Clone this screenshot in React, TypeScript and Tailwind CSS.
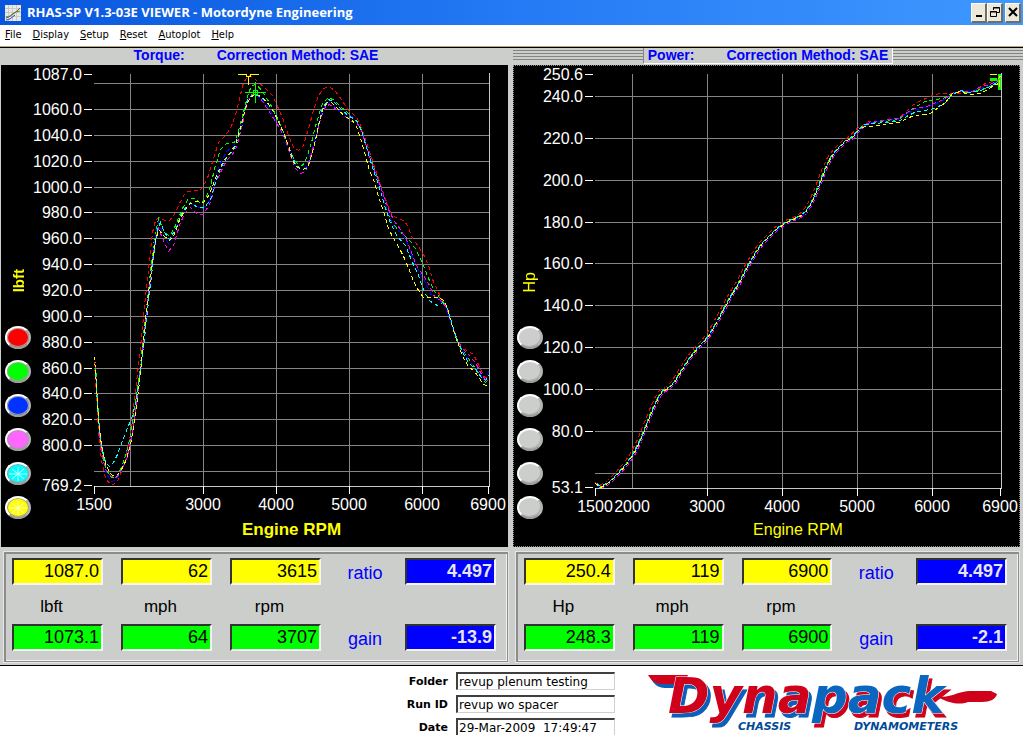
type Point = [number, number];

interface Series {
  color: string;
  points: Point[];
}

interface Tick {
  label: string;
  pos: number;
}

interface ChartProps {
  title: string;
  viewBox: string;
  left: number;
  right: number;
  bottom: number;
  yTicks: Tick[];
  xTicks: Tick[];
  gridX: number[];
  gridY: number[];
  series: Series[];
  boldTitle?: boolean;
  children?: React.ReactNode;
}

const COLORS = {
  red: '#ff0000',
  green: '#00ff00',
  blue: '#0000ff',
  magenta: '#ff00ff',
  cyan: '#00ffff',
  yellow: '#ffff00',
};

const torqueSeries: Series[] = [
  {
    color: COLORS.red,
    points: [
      [94, 362], [96, 395], [98, 430], [101, 460], [105, 478], [111, 485], [117, 481], [124, 463], [129, 438], [134, 398],
      [138, 365], [141, 338], [144, 305], [147, 278], [150, 250], [152, 232], [155, 220], [158, 217], [162, 219], [168, 221],
      [174, 214], [179, 203], [185, 192], [192, 190], [199, 190], [203, 186], [208, 175], [213, 158], [218, 142], [224, 136],
      [230, 128], [235, 115], [240, 94], [243, 82], [248, 75], [253, 77], [258, 82], [264, 87], [272, 95], [278, 108],
      [283, 120], [288, 135], [293, 147], [298, 150], [303, 145], [308, 128], [313, 110], [318, 95], [323, 88], [329, 86],
      [335, 91], [341, 99], [348, 110], [354, 115], [358, 120], [362, 130], [366, 142], [372, 160], [378, 178], [384, 196],
      [390, 212], [395, 217], [403, 220], [407, 225], [412, 238], [418, 246], [423, 254], [428, 265], [432, 279], [438, 292],
      [442, 300], [447, 308], [451, 323], [456, 338], [461, 347], [468, 351], [473, 354], [478, 364], [484, 377], [488, 376],
    ],
  },
  {
    color: COLORS.green,
    points: [
      [95, 362], [97, 400], [99, 430], [102, 455], [106, 470], [111, 477], [116, 477], [121, 467], [126, 452], [130, 435],
      [135, 400], [140, 365], [144, 325], [148, 290], [151, 262], [154, 238], [158, 218], [163, 230], [169, 236], [175, 225],
      [182, 208], [188, 198], [194, 198], [200, 203], [205, 199], [210, 185], [215, 165], [220, 149], [226, 143], [234, 142],
      [238, 130], [243, 112], [247, 96], [251, 85], [256, 84], [262, 91], [270, 104], [276, 116], [283, 132], [290, 153],
      [297, 163], [302, 165], [306, 158], [311, 142], [316, 122], [322, 103], [328, 97], [334, 100], [340, 106], [348, 113],
      [355, 119], [361, 129], [366, 145], [372, 163], [380, 186], [386, 208], [391, 222], [398, 230], [404, 235], [410, 241],
      [416, 250], [422, 263], [428, 278], [434, 291], [440, 298], [446, 306], [450, 320], [456, 338], [461, 349], [466, 355],
      [472, 364], [479, 374], [485, 382], [488, 380],
    ],
  },
  {
    color: COLORS.blue,
    points: [
      [95, 370], [97, 405], [99, 432], [102, 457], [106, 474], [111, 481], [116, 479], [121, 470], [126, 456], [131, 435],
      [136, 400], [141, 364], [145, 325], [149, 288], [152, 260], [155, 236], [158, 222], [163, 235], [168, 243], [174, 232],
      [182, 211], [190, 203], [196, 206], [202, 208], [208, 203], [214, 180], [219, 165], [226, 151], [233, 146], [237, 137],
      [242, 118], [247, 99], [253, 93], [260, 97], [268, 107], [276, 121], [283, 135], [290, 155], [296, 167], [301, 169],
      [306, 166], [311, 150], [316, 133], [321, 112], [326, 103], [331, 103], [338, 110], [346, 114], [354, 117], [361, 129],
      [367, 148], [373, 168], [380, 188], [387, 210], [392, 224], [399, 231], [406, 240], [413, 259], [419, 272], [425, 282],
      [431, 295], [438, 299], [445, 306], [451, 324], [457, 341], [463, 352], [470, 362], [477, 369], [483, 379], [486, 378], [488, 371],
    ],
  },
  {
    color: COLORS.magenta,
    points: [
      [95, 366], [97, 405], [99, 435], [102, 457], [106, 471], [111, 476], [116, 477], [121, 470], [127, 456], [132, 432],
      [137, 395], [141, 360], [145, 322], [149, 285], [152, 260], [155, 240], [158, 228], [163, 240], [168, 251], [173, 245],
      [179, 225], [184, 213], [190, 207], [197, 214], [203, 214], [210, 202], [215, 183], [220, 172], [226, 160], [232, 154],
      [236, 147], [241, 128], [246, 105], [251, 94], [256, 93], [262, 101], [270, 113], [277, 124], [284, 137], [290, 155],
      [295, 168], [300, 173], [305, 171], [310, 156], [315, 140], [320, 118], [325, 106], [329, 104], [336, 109], [344, 115],
      [351, 121], [357, 123], [361, 130], [366, 146], [372, 165], [380, 186], [388, 209], [394, 221], [400, 229], [406, 239],
      [412, 255], [417, 267], [423, 275], [428, 283], [434, 296], [440, 300], [446, 307], [451, 323], [457, 340], [463, 349],
      [470, 356], [476, 364], [481, 374], [486, 381], [488, 380],
    ],
  },
  {
    color: COLORS.cyan,
    points: [
      [95, 372], [97, 405], [99, 430], [102, 450], [105, 462], [109, 466], [113, 462], [117, 454], [121, 443], [126, 430],
      [131, 418], [135, 403], [139, 378], [143, 348], [147, 310], [151, 275], [154, 248], [157, 228], [160, 222], [164, 232],
      [169, 239], [175, 229], [182, 211], [190, 202], [197, 207], [204, 207], [210, 199], [215, 182], [220, 168], [227, 156],
      [233, 150], [237, 141], [242, 120], [247, 99], [253, 94], [260, 96], [268, 104], [276, 115], [283, 132], [289, 148],
      [295, 164], [301, 169], [307, 168], [312, 152], [317, 130], [322, 107], [328, 99], [334, 102], [341, 109], [349, 116],
      [356, 120], [361, 130], [366, 147], [372, 167], [378, 184], [384, 205], [390, 223], [397, 236], [405, 245], [412, 262],
      [418, 275], [424, 292], [430, 301], [437, 305], [442, 302], [447, 308], [452, 325], [457, 340], [463, 354], [468, 362],
      [475, 369], [481, 377], [485, 380], [488, 375],
    ],
  },
  {
    color: COLORS.yellow,
    points: [
      [94, 357], [96, 385], [98, 420], [101, 445], [105, 463], [109, 472], [112, 475], [116, 475], [120, 471], [125, 461],
      [130, 445], [134, 420], [138, 390], [141, 362], [144, 330], [147, 300], [151, 270], [154, 245], [158, 229], [163, 235],
      [169, 240], [173, 236], [178, 222], [184, 210], [190, 203], [196, 201], [203, 202], [209, 194], [214, 180], [219, 168],
      [224, 159], [230, 152], [235, 144], [240, 127], [245, 108], [249, 98], [255, 93], [262, 97], [270, 106], [276, 117],
      [282, 130], [288, 145], [292, 160], [297, 167], [302, 169], [307, 167], [311, 155], [315, 140], [319, 120], [323, 107],
      [327, 102], [331, 102], [337, 108], [344, 116], [351, 119], [356, 126], [360, 138], [364, 152], [369, 170], [374, 182],
      [378, 196], [383, 211], [388, 228], [393, 238], [398, 246], [404, 258], [409, 270], [413, 281], [418, 290], [423, 297],
      [430, 297], [437, 297], [442, 299], [447, 307], [450, 320], [454, 333], [459, 347], [463, 358], [468, 366], [474, 371],
      [479, 378], [483, 384], [488, 386],
    ],
  },
];

// All power runs share the climb up to 5000 rpm, they only separate above it
const powerClimb: Point[] = [
  [595, 483], [600, 487], [604, 485], [610, 481], [618, 473], [626, 464], [633, 454], [640, 440], [646, 425], [652, 410],
  [658, 397], [662, 391], [668, 388], [674, 382], [682, 369], [690, 357], [697, 348], [704, 341], [710, 333], [717, 321],
  [724, 308], [731, 295], [738, 284], [748, 265], [755, 253], [762, 243], [770, 235], [776, 229], [783, 224], [790, 220],
  [798, 217], [805, 212], [811, 203], [818, 187], [824, 171], [830, 158], [836, 150], [845, 141], [852, 137], [858, 130],
];

const shifted = (dx: number, dy: number): Point[] =>
  powerClimb.map(([x, y]) => [Math.max(x + dx, 595), y + dy]);

const powerSeries: Series[] = [
  {
    color: COLORS.red,
    points: [
      ...shifted(-3, -1), [862, 125], [868, 121], [880, 121], [890, 119], [898, 118], [905, 112], [912, 105], [920, 100],
      [928, 97], [933, 94], [942, 93], [955, 93], [966, 92], [972, 91], [980, 87], [986, 82], [996, 81], [1000, 76],
    ],
  },
  {
    color: COLORS.green,
    points: [
      ...shifted(-1, 0), [864, 125], [872, 122], [884, 121], [898, 119], [906, 113], [914, 107], [924, 101], [934, 99],
      [943, 98], [950, 94], [959, 91], [968, 92], [976, 90], [984, 88], [992, 85], [1000, 78],
    ],
  },
  {
    color: COLORS.blue,
    points: [
      ...shifted(0, 1), [864, 125], [872, 122], [886, 120], [898, 119], [906, 113], [914, 110], [924, 107], [934, 104],
      [944, 99], [952, 93], [960, 91], [970, 91], [980, 88], [990, 85], [1000, 79],
    ],
  },
  {
    color: COLORS.magenta,
    points: [
      ...shifted(1, 1), [866, 123], [876, 121], [888, 119], [898, 118], [906, 112], [915, 108], [926, 106], [936, 102],
      [945, 98], [953, 92], [962, 91], [972, 91], [980, 86], [990, 84], [1000, 78],
    ],
  },
  {
    color: COLORS.cyan,
    points: [
      ...shifted(0, -1), [864, 124], [874, 123], [886, 122], [898, 121], [906, 116], [914, 112], [924, 110], [934, 108],
      [944, 103], [952, 94], [960, 90], [968, 92], [978, 91], [988, 87], [1000, 80],
    ],
  },
  {
    color: COLORS.yellow,
    points: [
      ...powerClimb, [864, 126], [872, 126], [880, 125], [890, 123], [900, 122], [906, 118], [914, 115], [924, 114],
      [930, 113], [938, 107], [945, 102], [952, 93], [960, 91], [968, 94], [975, 94], [982, 92], [990, 87], [1000, 82],
    ],
  },
];

const torqueY: Tick[] = [
  { label: '1087.0', pos: 74 }, { label: '1060.0', pos: 109 }, { label: '1040.0', pos: 135 }, { label: '1020.0', pos: 161 },
  { label: '1000.0', pos: 187 }, { label: '980.0', pos: 212 }, { label: '960.0', pos: 238 }, { label: '940.0', pos: 264 },
  { label: '920.0', pos: 290 }, { label: '900.0', pos: 316 }, { label: '880.0', pos: 342 }, { label: '860.0', pos: 368 },
  { label: '840.0', pos: 393 }, { label: '820.0', pos: 419 }, { label: '800.0', pos: 445 }, { label: '769.2', pos: 485 },
];

const torqueX: Tick[] = [
  { label: '1500', pos: 94 }, { label: '3000', pos: 203 }, { label: '4000', pos: 276 },
  { label: '5000', pos: 349 }, { label: '6000', pos: 422 }, { label: '6900', pos: 488 },
];

const powerY: Tick[] = [
  { label: '250.6', pos: 74 }, { label: '240.0', pos: 96 }, { label: '220.0', pos: 138 }, { label: '200.0', pos: 180 },
  { label: '180.0', pos: 222 }, { label: '160.0', pos: 263 }, { label: '140.0', pos: 305 }, { label: '120.0', pos: 347 },
  { label: '100.0', pos: 389 }, { label: '80.0', pos: 431 }, { label: '53.1', pos: 487 },
];

const powerX: Tick[] = [
  { label: '1500', pos: 595 }, { label: '2000', pos: 632 }, { label: '3000', pos: 707 }, { label: '4000', pos: 782 },
  { label: '5000', pos: 857 }, { label: '6000', pos: 932 }, { label: '6900', pos: 1000 },
];

function toPath(points: Point[]) {
  return points.map(([x, y], i) => `${i === 0 ? 'M' : 'L'}${x} ${y}`).join(' ');
}

function Chart({ title, viewBox, left, right, bottom, yTicks, xTicks, gridX, gridY, series, boldTitle, children }: ChartProps) {
  return (
    <svg
      viewBox={viewBox}
      className="block h-auto w-full min-w-0 flex-1 overflow-visible font-['Liberation_Sans',Arial,sans-serif]"
      role="img"
      aria-label={title}
    >
      <g stroke="#848484" strokeWidth="1" shapeRendering="crispEdges">
        {gridX.map((x) => (
          <line key={x} x1={x + 0.5} x2={x + 0.5} y1="74" y2={bottom} />
        ))}
        {gridY.map((y) => (
          <line key={y} x1={left} x2={right} y1={y + 0.5} y2={y + 0.5} />
        ))}
      </g>

      {/* Runs */}
      <g fill="none" strokeWidth="1" strokeDasharray="4 3" shapeRendering="crispEdges">
        {series.map((s, i) => (
          <path key={s.color} d={toPath(s.points)} stroke={s.color} strokeDashoffset={i * 3} transform="translate(0.5 0.5)" />
        ))}
      </g>

      {/* Axes */}
      <g stroke="#c6c6c6" strokeWidth="1" shapeRendering="crispEdges">
        <line x1={right + 0.5} x2={right + 0.5} y1="73" y2={bottom + 1} />
        <line x1={left} x2={right} y1={bottom + 0.5} y2={bottom + 0.5} />
      </g>
      <g stroke="#ffffff" strokeWidth="1" shapeRendering="crispEdges">
        {yTicks.map((t) => (
          <line key={t.label} x1={left - 10} x2={left - 2} y1={t.pos + 0.5} y2={t.pos + 0.5} />
        ))}
        {xTicks
          .filter((t) => t.label !== '2000')
          .map((t) => (
            <line key={t.label} x1={t.pos + 0.5} x2={t.pos + 0.5} y1={bottom} y2={bottom + 8} />
          ))}
      </g>
      <g fill="#ffffff" fontSize="16">
        {yTicks.map((t) => (
          <text key={t.label} x={left - 12} y={t.pos + 6} textAnchor="end">
            {t.label}
          </text>
        ))}
        {xTicks.map((t) => (
          <text key={t.label} x={t.pos} y={bottom + 24} textAnchor="middle">
            {t.label}
          </text>
        ))}
      </g>
      <text
        x={(left + right) / 2}
        y="535"
        fill="#ffff00"
        fontSize={boldTitle ? 17 : 16}
        fontWeight={boldTitle ? 700 : 400}
        textAnchor="middle"
      >
        Engine RPM
      </text>
      {children}
    </svg>
  );
}

const runButtons = [
  { name: 'Red run', fill: 'bg-[#ff0000]' },
  { name: 'Green run', fill: 'bg-[#00ff00]' },
  { name: 'Blue run', fill: 'bg-[#0033ff]' },
  { name: 'Magenta run', fill: 'bg-[#ff66ff]' },
  { name: 'Cyan run', fill: 'bg-[#00ffff]', star: true },
  { name: 'Yellow run', fill: 'bg-[#ffff00]', star: true },
];

function RunSelector({ unit, bold, coloured }: { unit: string; bold?: boolean; coloured?: boolean }) {
  return (
    <div className="flex w-[30px] shrink-0 flex-col items-end">
      <div className="flex h-[261px] w-[26px] flex-col items-center justify-end pb-[34px]">
        <span
          className={`rotate-180 leading-none text-[#ffff00] [writing-mode:vertical-rl] ${
            bold ? 'text-[15px] font-bold' : 'text-[16px]'
          }`}
        >
          {unit}
        </span>
      </div>
      <div className="flex flex-col gap-[11px]">
        {runButtons.map((b) => (
          <button
            key={b.name}
            aria-label={b.name}
            className={`flex h-[23px] w-[26px] items-center justify-center rounded-[50%] border-2 border-t-white border-r-[#b4b4b4] border-b-[#9c9c9c] border-l-white ${
              coloured ? b.fill : 'bg-[#cccecc]'
            } ${coloured ? 'shadow-[inset_0_0_0_1px_#a0a0a0]' : 'shadow-[inset_-1px_-1px_0_#b0b0b0]'}`}
          >
            {coloured && b.star && (
              <svg viewBox="0 0 20 16" className="h-4 w-5" stroke="#ffffff" strokeWidth="1" opacity="0.8">
                <path d="M10 1V15M1 8H19M4 3L16 13M16 3L4 13" />
              </svg>
            )}
          </button>
        ))}
      </div>
    </div>
  );
}

const BOX =
  'h-[27px] w-full min-w-0 border-2 border-t-[#333333] border-l-[#333333] border-r-[#f4f4f4] border-b-[#f4f4f4] px-0.5 text-right text-[18px] leading-none outline-none';

interface ReadoutProps {
  id: string;
  unit: string;
  first: string[];
  second: string[];
  ratio: string;
  gain: string;
}

function Readout({ id, unit, first, second, ratio, gain }: ReadoutProps) {
  const units = [unit, 'mph', 'rpm'];

  return (
    <section className="mx-1 border border-[#8c8c8c] shadow-[inset_1px_1px_0_#8c8c8c,inset_-1px_-1px_0_#f2f2f2,0_0_0_1px_#e6e6e6]">
      <div className="grid grid-cols-[91fr_91fr_91fr_48fr_91fr] grid-rows-[27px_39px_27px] items-center gap-x-[18px] pt-[5px] pr-[11px] pb-[10px] pl-[7px]">
        {first.map((v, i) => (
          <input key={i} readOnly aria-label={`Primary ${units[i]}`} value={v} className={`${BOX} bg-[#ffff00] text-black`} />
        ))}
        <label htmlFor={`${id}-ratio`} className="pt-0.5 pl-1 text-center text-[18px] leading-none text-[#0000ff]">
          ratio
        </label>
        <input id={`${id}-ratio`} readOnly value={ratio} className={`${BOX} bg-[#0000ff] font-bold text-[#e6e6e6]`} />

        {units.map((u) => (
          <span key={u} className="pr-3 pt-1 text-center text-[17px] leading-none">
            {u}
          </span>
        ))}
        <span />
        <span />

        {second.map((v, i) => (
          <input key={i} readOnly aria-label={`Secondary ${units[i]}`} value={v} className={`${BOX} bg-[#00ff00] text-black`} />
        ))}
        <label htmlFor={`${id}-gain`} className="pt-0.5 pl-1 text-center text-[18px] leading-none text-[#0000ff]">
          gain
        </label>
        <input id={`${id}-gain`} readOnly value={gain} className={`${BOX} bg-[#0000ff] font-bold text-[#e6e6e6]`} />
      </div>
    </section>
  );
}

function TitleBar() {
  const button =
    'flex h-5 w-4 items-center justify-center border-r-2 border-b-2 border-t border-l border-t-white border-l-white border-r-[#716f64] border-b-[#716f64] bg-[#ece9d8]';
  return (
    <header className="flex h-[25px] items-center bg-gradient-to-r from-[#0855dd] via-[#237af4] to-[#3f98ff] pr-0.5 pl-[5px]">
      <svg viewBox="0 0 16 16" className="h-4 w-4">
        <rect width="16" height="16" fill="#e9e9e9" />
        <path d="M0 3.5H16M0 7.5H16M0 11.5H16M3.5 0V16M7.5 0V16M11.5 0V16" stroke="#c9c9c9" />
        <path d="M1 13C5 12 6 10 8 9S12 6 15 3" stroke="#e02020" fill="none" />
        <path d="M1 12C5 12 6 10 9 8S12 7 15 6" stroke="#20a020" fill="none" />
        <path d="M1 15C5 15 7 12 10 10" stroke="#3040e0" fill="none" />
      </svg>
      <h1 className="ml-1.5 flex-1 font-['Open_Sans',sans-serif] text-[13px] leading-none font-bold text-white">
        RHAS-SP V1.3-03E VIEWER - Motordyne Engineering
      </h1>
      <div className="flex">
        <button aria-label="Minimize" className={button}>
          <svg viewBox="0 0 12 12" className="h-3 w-3">
            <path d="M3 10H9" stroke="#000" strokeWidth="2" />
          </svg>
        </button>
        <button aria-label="Restore" className={button}>
          <svg viewBox="0 0 12 12" className="h-3 w-3" fill="none" stroke="#000">
            <path d="M4.500 4V1.500H10.500V6.500H8M4 2H11" />
            <path d="M1.500 5.500H7.500V10.500H1.500ZM1 6H8" />
          </svg>
        </button>
        <button aria-label="Close" className={`${button} ml-0.5`}>
          <svg viewBox="0 0 12 12" className="h-3 w-3">
            <path d="M2 2L10 10M10 2L2 10" stroke="#000" strokeWidth="2" />
          </svg>
        </button>
      </div>
    </header>
  );
}

function MenuBar() {
  return (
    <nav className="flex h-[21px] items-center gap-[11px] bg-white pl-[5px] font-['DejaVu_Sans_Condensed','DejaVu_Sans',sans-serif] text-[11px] text-black">
      {['File', 'Display', 'Setup', 'Reset', 'Autoplot', 'Help'].map((item) => (
        <button key={item}>
          <span className="underline">{item[0]}</span>
          {item.slice(1)}
        </button>
      ))}
    </nav>
  );
}

function Logo() {
  return (
    <svg
      viewBox="0 0 360 69"
      className="h-[69px] w-[360px] overflow-visible font-['DejaVu_Sans',sans-serif] font-bold italic"
      role="img"
      aria-label="Dynapack Chassis Dynamometers"
    >
      {/* Each half throws a hard shadow in the colour of the other half */}
      <g className="[filter:drop-shadow(3px_4px_0_#0b5fb8)]" fill="#d0021b">
        <path d="M8 9H48L44 18H22C15 18 11 14 8 9Z" />
        <text x="28" y="47" fontSize="50" stroke="#ffffff" strokeWidth="1" paintOrder="stroke">
          Dyna
        </text>
      </g>
      <g className="[filter:drop-shadow(3px_4px_0_#d0021b)]" fill="#0b66c0">
        <text x="172" y="47" fontSize="50" stroke="#ffffff" strokeWidth="1" paintOrder="stroke">
          pack
        </text>
      </g>
      <path d="M296 30C310 33 318 25 330 25H351L357 28C356 33 350 36 342 36H328C318 40 306 36 296 30Z" fill="#d0021b" />
      <g fontSize="11" fill="#004a98">
        <text x="98" y="64">
          CHASSIS
        </text>
        <text x="214" y="64">
          DYNAMOMETERS
        </text>
      </g>
    </svg>
  );
}

function RunInfo() {
  const fields = [
    { id: 'folder', label: 'Folder', value: 'revup plenum testing' },
    { id: 'run-id', label: 'Run ID', value: 'revup wo spacer' },
    { id: 'date', label: 'Date', value: '29-Mar-2009  17:49:47' },
  ];
  return (
    <footer className="grid flex-1 grid-cols-[615fr_408fr] overflow-hidden border-t border-black bg-white">
      <div className="flex flex-col items-end gap-[5px] pt-1.5 font-['DejaVu_Sans',Verdana,sans-serif]">
        {fields.map((f) => (
          <div key={f.id} className="flex items-center gap-2">
            <label htmlFor={f.id} className="text-[11px] leading-none font-bold">
              {f.label}
            </label>
            <input
              id={f.id}
              defaultValue={f.value}
              className="h-[18px] w-[159px] border-t-2 border-r border-b border-l-2 border-t-[#404040] border-r-[#d0d0d0] border-b-[#d0d0d0] border-l-[#404040] px-px text-[12px] leading-none outline-none"
            />
          </div>
        ))}
      </div>
      <div className="pl-[25px]">
        <Logo />
      </div>
    </footer>
  );
}

export default function App() {
  return (
    <div className="flex h-screen flex-col overflow-hidden bg-[#cccecc] font-['Liberation_Sans',Arial,sans-serif] text-black">
      <TitleBar />
      <MenuBar />

      <main className="grid grid-cols-[512fr_511fr] border-t border-[#b5a678]">
        {/* Torque */}
        <div className="border-t border-black">
          <h2 className="flex h-[17px] justify-center gap-8 text-[14px] leading-[14px] font-bold text-[#0000ff]">
            <span>Torque:</span>
            <span>Correction Method: SAE</span>
          </h2>
          <div className="mr-1 ml-px flex bg-black">
            <RunSelector unit="lbft" bold coloured />
            <Chart
              title="Torque against engine RPM"
              viewBox="31 65 477 482"
              left={94}
              right={489}
              bottom={486}
              yTicks={torqueY}
              xTicks={torqueX}
              gridX={[130, 203, 276, 349, 422]}
              gridY={[83, 109, 135, 161, 187, 212, 238, 264, 290, 316, 342, 368, 393, 419, 445, 471]}
              series={torqueSeries}
              boldTitle
            >
              <g fill="none" strokeWidth="1" shapeRendering="crispEdges">
                <path d="M238 74.500H246M251 74.500H259M248.500 77V85M246 74.500L247 76.500H250L251 74.500" stroke={COLORS.yellow} />
                <path d="M245 92.500H266M255.500 82V103M253.500 90.500H257.500V94.500H253.500Z" stroke={COLORS.green} />
              </g>
            </Chart>
          </div>
        </div>

        {/* Power */}
        <div className="border-t border-black">
          <div className="ml-px flex h-[17px] items-start justify-center bg-[repeating-linear-gradient(#cccecc_0_2px,#848484_2px_3px)] bg-[length:100%_14px] bg-no-repeat">
            <h2 className="flex h-4 gap-8 border-r border-b border-l border-r-white border-b-white border-l-[#848484] bg-[#cccecc] px-1 text-[14px] leading-[14px] font-bold text-[#0000ff]">
              <span>Power:</span>
              <span>Correction Method: SAE</span>
            </h2>
          </div>
          <div className="mr-[3px] ml-px flex bg-black outline-1 -outline-offset-1 outline-[#8c8c8c] outline-dotted">
            <RunSelector unit="Hp" />
            <Chart
              title="Power against engine RPM"
              viewBox="543 65 477 482"
              left={595}
              right={1001}
              bottom={488}
              yTicks={powerY}
              xTicks={powerX}
              gridX={[632, 707, 782, 857, 932]}
              gridY={[96, 138, 180, 222, 263, 305, 347, 389, 431, 473]}
              series={powerSeries}
            >
              <g shapeRendering="crispEdges">
                <path d="M990 78H997V81H990ZM998 74H1001V90H998Z" fill={COLORS.green} />
                <path d="M990 74.500H997M998 79L1000.500 76M999.500 80V87" stroke={COLORS.yellow} fill="none" />
              </g>
            </Chart>
          </div>
        </div>
      </main>

      <div className="grid grid-cols-[512fr_511fr] pt-[5px] pb-[3px]">
        <Readout
          id="torque"
          unit="lbft"
          first={['1087.0', '62', '3615']}
          second={['1073.1', '64', '3707']}
          ratio="4.497"
          gain="-13.9"
        />
        <Readout
          id="power"
          unit="Hp"
          first={['250.4', '119', '6900']}
          second={['248.3', '119', '6900']}
          ratio="4.497"
          gain="-2.1"
        />
      </div>

      <RunInfo />
    </div>
  );
}
